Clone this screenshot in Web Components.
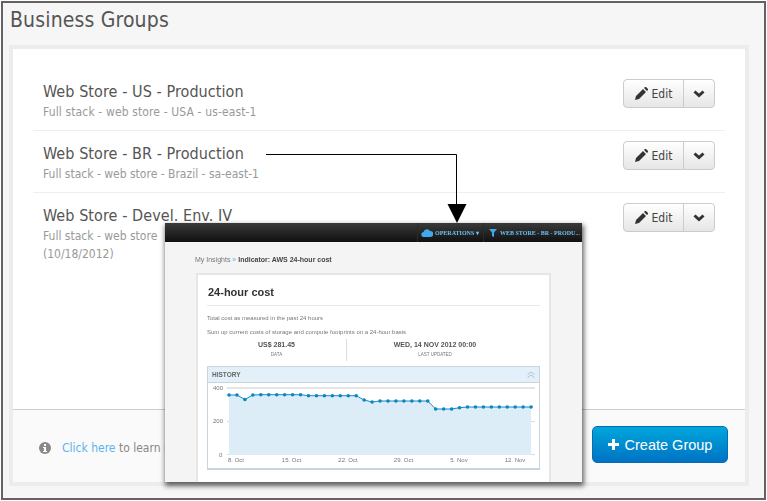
<!DOCTYPE html>
<html lang="en">
<head>
<meta charset="utf-8">
<title>Business Groups</title>
<style>
  html, body { margin: 0; background: #fff; }
  body { font-family: "DejaVu Sans Condensed", "DejaVu Sans", sans-serif; font-stretch: condensed; }
  a { color: #5ab4f0; }
</style>
</head>
<body>
<app-frame>
  <span slot="title">Business Groups</span>
  <group-card>
    <group-row name="Web Store - US - Production" style="--track:.13px">Full stack - web store - USA - us-east-1</group-row>
    <group-row name="Web Store - BR - Production">Full stack - web store - Brazil - sa-east-1</group-row>
    <group-row name="Web Store - Devel. Env. IV" last>Full stack - web store<br>(10/18/2012)</group-row>
    <span slot="note"><a>Click here</a> to learn more</span>
    <create-button slot="action">Create Group</create-button>
  </group-card>
  <callout-arrow></callout-arrow>
  <insight-shot></insight-shot>
</app-frame>

<script>
class AppFrame extends HTMLElement {
  constructor(){
    super();
    this.attachShadow({mode:"open"});
    this.shadowRoot.innerHTML = `
      <style>
        :host { display: block; position: relative; box-sizing: border-box; margin: 1px; width: 765px; height: 499px;
          border: 2px solid #666262; background: #f6f6f6; overflow: hidden; padding: 0 15px 0 6px; }
        h1 { margin: 0 0 0 1px; height: 42px; font-size: 21px; font-weight: 400; line-height: 34px; letter-spacing: .15px; color: #555; }
      </style>
      <h1><slot name="title"></slot></h1>
      <slot></slot>
    `;
  }
}

class GroupCard extends HTMLElement {
  constructor(){
    super();
    this.attachShadow({mode:"open"});
    this.shadowRoot.innerHTML = `
      <style>
        :host { display: flex; flex-direction: column; box-sizing: border-box; height: 441px; border: 4px solid #ececec; background: #fff; }
        .list { flex: 1; padding: 20px 20px 0; }
        footer { height: 72px; border-top: 1px solid #ccc; background: #fafafa; display: flex; align-items: center;
          padding: 0 17px 0 26px; gap: 11px; font-size: 12px; color: #888; }
        footer svg { width: 12px; height: 12px; flex: none; margin-top: 4px; }
        .note { flex: 1; margin-top: 3px; }
      </style>
      <div class="list"><slot></slot></div>
      <footer>
        <svg viewBox="0 0 12 12"><circle cx="6" cy="6" r="6" fill="#888"/><rect x="5" y="2" width="2" height="2" fill="#fff"/><path d="M4 5h3v4h1v1H4V9h1V6H4z" fill="#fff"/></svg>
        <div class="note"><slot name="note"></slot></div>
        <slot name="action"></slot>
      </footer>
    `;
  }
}

class GroupRow extends HTMLElement {
  constructor(){
    super();
    this.attachShadow({mode:"open"});
    this.shadowRoot.innerHTML = `
      <style>
        :host { display: flex; justify-content: space-between; box-sizing: border-box; height: 62px; padding: 10px 10px 0;
          border-bottom: 1px solid #eee; }
        :host([last]) { border-bottom: 0; }
        .name { font-size: 16px; line-height: 24px; letter-spacing: .07px; color: #555; padding-top: 1px; }
        .desc { font-size: 12px; line-height: 18px; letter-spacing: var(--track, 0); color: #999; margin-top: -1px; }
      </style>
      <div>
        <div class="name"></div>
        <div class="desc"><slot></slot></div>
      </div>
      <edit-button></edit-button>
    `;
    this.shadowRoot.querySelector(".name").textContent = this.getAttribute("name");
  }
}

class EditButton extends HTMLElement {
  constructor(){
    super();
    this.attachShadow({mode:"open"});
    this.shadowRoot.innerHTML = `
      <style>
        :host { display: flex; box-sizing: border-box; width: 92px; height: 29px; border: 1px solid #ccc; border-radius: 4px;
          background: linear-gradient(#fff, #e6e6e6); color: #444; font-size: 12px; letter-spacing: 0; }
        .edit { width: 59px; display: flex; align-items: center; justify-content: center; gap: 4px; border-right: 1px solid #ccc; }
        .more { flex: 1; display: flex; align-items: center; justify-content: center; }
        .pencil { width: 13px; height: 13px; }
        .chev { width: 12px; height: 8px; }
      </style>
      <div class="edit">
        <svg class="pencil" viewBox="0 0 13 13"><path d="M0 13l1-4 7-7 3 3-7 7zM9 1l1-1q.5-.3 1 0l2 2q.3.5 0 1l-1 1z" fill="#333"/></svg>
        <span>Edit</span>
      </div>
      <div class="more">
        <svg class="chev" viewBox="0 0 12 8"><path d="M1.5 1.5L6 5.5l4.5-4" fill="none" stroke="#333" stroke-width="3"/></svg>
      </div>
    `;
  }
}

class CreateButton extends HTMLElement {
  constructor(){
    super();
    this.attachShadow({mode:"open"});
    this.shadowRoot.innerHTML = `
      <style>
        :host { display: flex; box-sizing: border-box; align-items: center; justify-content: center; gap: 6px; width: 136px; height: 37px; margin-top: -3px;
          border: 1px solid #0a6cb0; border-radius: 5px; background: linear-gradient(#00a7dc, #0072c4);
          color: #fff; font: 14.5px "Liberation Sans", Arial, sans-serif; }
        svg { width: 11px; height: 11px; }
      </style>
      <svg viewBox="0 0 11 11"><path d="M4 0h3v4h4v3H7v4H4V7H0V4h4z" fill="#fff"/></svg>
      <span><slot></slot></span>
    `;
  }
}

// la flecha que va de la fila BR hasta la captura
class CalloutArrow extends HTMLElement {
  constructor(){
    super();
    this.attachShadow({mode:"open"});
    this.shadowRoot.innerHTML = `
      <style>
        :host { display: block; position: absolute; left: 263px; top: 150px; width: 205px; height: 72px; }
        svg { display: block; }
      </style>
      <svg width="205" height="72" viewBox="266 153 205 72">
        <path d="M266 154.5h190.500V206" fill="none" stroke="#000"/>
        <path d="M447.500 204h19l-9.500 19z" fill="#000"/>
      </svg>
    `;
  }
}

class InsightShot extends HTMLElement {
  constructor(){
    super();
    this.attachShadow({mode:"open"});
    this.shadowRoot.innerHTML = `
      <style>
        :host { display: block; position: absolute; left: 162px; top: 220px; width: 417px; height: 259px;
          box-shadow: 1px 3px 5px 1px rgba(0,0,0,.6); z-index: 2; background: #f4f4f4; }
        .clip { height: 100%; overflow: hidden; filter: blur(.4px); font-family: "Liberation Sans", Arial, sans-serif; font-stretch: normal; color: #777; }
        .bar { height: 19px; background: linear-gradient(#3a3a3a, #101010); display: flex; align-items: center; justify-content: flex-end;
          font: bold 6px "Liberation Serif", serif; color: #6cc0f0; white-space: nowrap; }
        .bar div { display: flex; align-items: center; height: 100%; border-left: 1px solid #2a2a2a; box-sizing: border-box; }
        .ops { width: 66px; padding-left: 3px; gap: 2px; }
        .store { width: 99px; padding-left: 5px; gap: 3px; overflow: hidden; }
        .crumb { height: 31px; padding-left: 30px; font-size: 7px; line-height: 36px; color: #777; }
        .crumb b { color: #444; }
        .crumb i { color: #5ab4f0; font-style: normal; }
        .panel { margin-left: 31px; width: 355px; height: 230px; box-sizing: border-box; border: 2px solid #e6e6e6; background: #fff; padding: 0 9px; }
        h2 { margin: 0; height: 30px; border-bottom: 1px solid #e8e8e8; font-size: 11px; line-height: 34px; color: #333; padding-left: 1px; }
        p { margin: 0; font-size: 6px; line-height: 14px; color: #777; }
        p:first-of-type { margin-top: 5px; }
        .stats { display: grid; grid-template-columns: 139px 1fr; height: 22px; margin-top: -1px; margin-bottom: 5px; text-align: center; padding-top: 1px; }
        .stats div + div { border-left: 1px solid #ddd; padding-right: 17px; }
        .stats b { display: block; font-size: 7px; line-height: 12px; color: #555; }
        .stats span { display: block; font-size: 4.500px; line-height: 8px; color: #777; }
        .box { width: 333px; height: 104px; box-sizing: border-box; border: 1px solid #c8d5dd; border-bottom-width: 2px; }
        .head { height: 16px; background: #e4f0f9; border-bottom: 1px solid #c8d5dd; box-sizing: border-box; display: flex;
          justify-content: space-between; align-items: center; padding: 0 4px; font-size: 6.500px; font-weight: bold; color: #666; }
        .head svg { width: 8px; height: 7px; }
      </style>
      <div class="clip">
        <div class="bar">
          <div class="ops">
            <svg width="12" height="8" viewBox="0 0 12 8"><path d="M3 8a2.500 2.500 0 0 1-.500-5 3.500 3.500 0 0 1 6.500-1 3 3 0 0 1 .500 6z" fill="#3fa9ec"/></svg>
            <span>OPERATIONS</span><span>&#9662;</span>
          </div>
          <div class="store">
            <svg width="8" height="8" viewBox="0 0 8 8"><path d="M0 0h8L5 3.500V8L3 7V3.500z" fill="#3fa9ec"/></svg>
            <span>WEB STORE - BR - PRODU...</span>
          </div>
        </div>
        <div class="crumb">My Insights <i>&raquo;</i> <b>Indicator: AWS 24-hour cost</b></div>
        <div class="panel">
          <h2>24-hour cost</h2>
          <p>Total cost as measured in the past 24 hours</p>
          <p>Sum up current costs of storage and compute footprints on a 24-hour basis</p>
          <div class="stats">
            <div><b>US$ 281.45</b><span>DATA</span></div>
            <div><b>WED, 14 NOV 2012 00:00</b><span>LAST UPDATED</span></div>
          </div>
          <div class="box">
            <div class="head">
              <span>HISTORY</span>
              <svg viewBox="0 0 8 7"><path d="M.5 3.500L4 1l3.500 2.500M.5 6.500L4 4l3.500 2.500" fill="none" stroke="#a9c4d4"/></svg>
            </div>
            <history-chart></history-chart>
          </div>
        </div>
      </div>
    `;
  }
}

class HistoryChart extends HTMLElement {
  constructor(){
    super();
    this.attachShadow({mode:"open"});
    const ys = [395,395,399.500,395,394.700,394.700,394.700,394.700,394.700,394.700,395.700,395.700,395.700,395.700,395.700,395.700,395.700,400,402,401,401,401,401,401,401,401,409,409,409,407.700];
    while (ys.length < 39) ys.push(407);
    const pts = ys.map((y, i) => [229 + i * 7.950, y]);
    const line = pts.map(p => p.join(",")).join(" ");
    const dots = pts.map(p => `<circle cx="${p[0]}" cy="${p[1]}" r="1.800"/>`).join("");
    const xl = [["8. Oct",236],["15. Oct",291.500],["22. Oct",348],["29. Oct",403.500],["5. Nov",459],["12. Nov",515]];
    this.shadowRoot.innerHTML = `
      <style>
        :host { display: block; height: 85px; }
        svg { display: block; }
        text { font: 6px "Liberation Sans", Arial, sans-serif; fill: #777; }
      </style>
      <svg width="331" height="85" viewBox="208 383 331 85">
        <path d="M227 388h308" stroke="#ddd" stroke-width="1.500" fill="none"/>
        <path d="M227 421.500h4M531 421.500h4M227 454.500h308" stroke="#ddd" fill="none"/>
        <polygon points="229,455 ${line} 531,455" fill="#dcedf7"/>
        <polyline points="${line}" fill="none" stroke="#1a8cc4" stroke-width="1"/>
        <g fill="#0a86c2">${dots}</g>
        <text x="213" y="390">400</text>
        <text x="213" y="423">200</text>
        <text x="219" y="457">0</text>
        ${xl.map(l => `<text x="${l[1]}" y="462" text-anchor="middle">${l[0]}</text>`).join("")}
      </svg>
    `;
  }
}

customElements.define("app-frame", AppFrame);
customElements.define("group-card", GroupCard);
customElements.define("group-row", GroupRow);
customElements.define("edit-button", EditButton);
customElements.define("create-button", CreateButton);
customElements.define("callout-arrow", CalloutArrow);
customElements.define("insight-shot", InsightShot);
customElements.define("history-chart", HistoryChart);
</script>
</body>
</html>
